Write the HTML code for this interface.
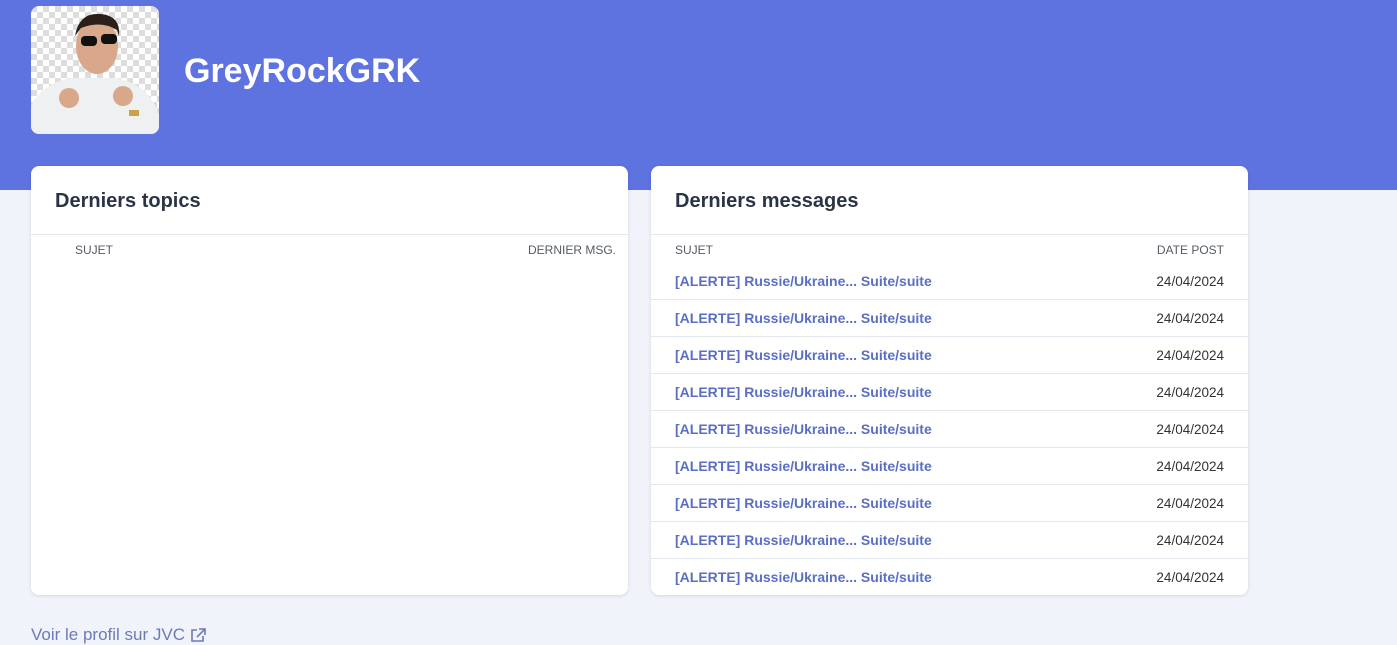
<!DOCTYPE html>
<html><head><meta charset="utf-8">
<style>
*{box-sizing:border-box;margin:0;padding:0}
body{width:1397px;height:630px;overflow:hidden;background:#f0f3f9;font-family:"Liberation Sans",sans-serif;position:relative}
.hdr{position:absolute;left:0;top:0;width:1397px;height:190px;background:#5e72e0}
.av{position:absolute;left:31px;top:6px;width:128px;height:128px;border-radius:8px;overflow:hidden}
.name{position:absolute;left:184px;top:52px;color:#fff;font-size:34px;font-weight:bold}
.card{position:absolute;top:166px;width:597px;height:429px;background:#fff;border-radius:8px;box-shadow:0 1px 3px rgba(0,0,0,.12);overflow:hidden}
.card h2{position:absolute;left:24px;top:24px;font-size:20px;font-weight:bold;color:#2b3445}
.card .line{position:absolute;left:0;right:0;top:68px;border-top:1px solid #e3e6ec}
.th{position:absolute;top:77px;font-size:12px;color:#555b66;text-transform:uppercase}
.row{position:absolute;left:0;right:0;height:37px;border-bottom:1px solid #e3e6ec}
.row a{position:absolute;left:24px;top:10px;font-size:14px;font-weight:bold;color:#5a6ec4;text-decoration:none}
.row span{position:absolute;right:24px;top:11px;font-size:13.5px;color:#333}
.foot{position:absolute;left:31px;top:625px;font-size:17px;color:#6e7ab8}
</style></head><body>
<div class="hdr"></div>
<div class="av">
<svg width="128" height="128" viewBox="0 0 128 128">
<defs><pattern id="c" width="12" height="12" patternUnits="userSpaceOnUse"><rect width="12" height="12" fill="#fff"/><rect width="6" height="6" fill="#ddd"/><rect x="6" y="6" width="6" height="6" fill="#ddd"/></pattern></defs>
<rect width="128" height="128" fill="url(#c)"/>
<path d="M0 128 L0 100 Q10 78 40 72 L86 72 Q120 80 128 110 L128 128Z" fill="#eef0f2"/>
<ellipse cx="66" cy="40" rx="21" ry="28" fill="#d9a88a"/>
<path d="M44 30 Q48 6 70 8 Q90 10 88 30 L86 24 Q70 14 50 22Z" fill="#2a1f1a"/>
<rect x="50" y="30" width="16" height="10" rx="4" fill="#111"/><rect x="70" y="28" width="16" height="10" rx="4" fill="#111"/>
<ellipse cx="38" cy="92" rx="10" ry="10" fill="#d9a88a"/><ellipse cx="92" cy="90" rx="10" ry="10" fill="#d9a88a"/>
<rect x="98" y="104" width="10" height="6" fill="#c9a24a"/>
</svg></div>
<div class="name">GreyRockGRK</div>

<div class="card" style="left:31px">
<h2>Derniers topics</h2><div class="line"></div>
<div class="th" style="left:44px">Sujet</div>
<div class="th" style="right:12px">Dernier msg.</div>
</div>

<div class="card" style="left:651px">
<h2>Derniers messages</h2><div class="line"></div>
<div class="th" style="left:24px">Sujet</div>
<div class="th" style="right:24px">Date post</div>
<div style="position:absolute;left:0;right:0;top:97px">
<div class="row" style="top:0"><a>[ALERTE] Russie/Ukraine... Suite/suite</a><span>24/04/2024</span></div>
<div class="row" style="top:37px"><a>[ALERTE] Russie/Ukraine... Suite/suite</a><span>24/04/2024</span></div>
<div class="row" style="top:74px"><a>[ALERTE] Russie/Ukraine... Suite/suite</a><span>24/04/2024</span></div>
<div class="row" style="top:111px"><a>[ALERTE] Russie/Ukraine... Suite/suite</a><span>24/04/2024</span></div>
<div class="row" style="top:148px"><a>[ALERTE] Russie/Ukraine... Suite/suite</a><span>24/04/2024</span></div>
<div class="row" style="top:185px"><a>[ALERTE] Russie/Ukraine... Suite/suite</a><span>24/04/2024</span></div>
<div class="row" style="top:222px"><a>[ALERTE] Russie/Ukraine... Suite/suite</a><span>24/04/2024</span></div>
<div class="row" style="top:259px"><a>[ALERTE] Russie/Ukraine... Suite/suite</a><span>24/04/2024</span></div>
<div class="row" style="top:296px;border-bottom:none"><a>[ALERTE] Russie/Ukraine... Suite/suite</a><span>24/04/2024</span></div>
</div>
</div>

<div class="foot">Voir le profil sur JVC <svg width="16" height="14" viewBox="0 0 16 14" style="vertical-align:top;margin-top:3px"><path d="M7 2H2v11h11V8M9 1h6v6M15 1L7 9" fill="none" stroke="#6e7ab8" stroke-width="1.6"/></svg></div>
</body></html>
